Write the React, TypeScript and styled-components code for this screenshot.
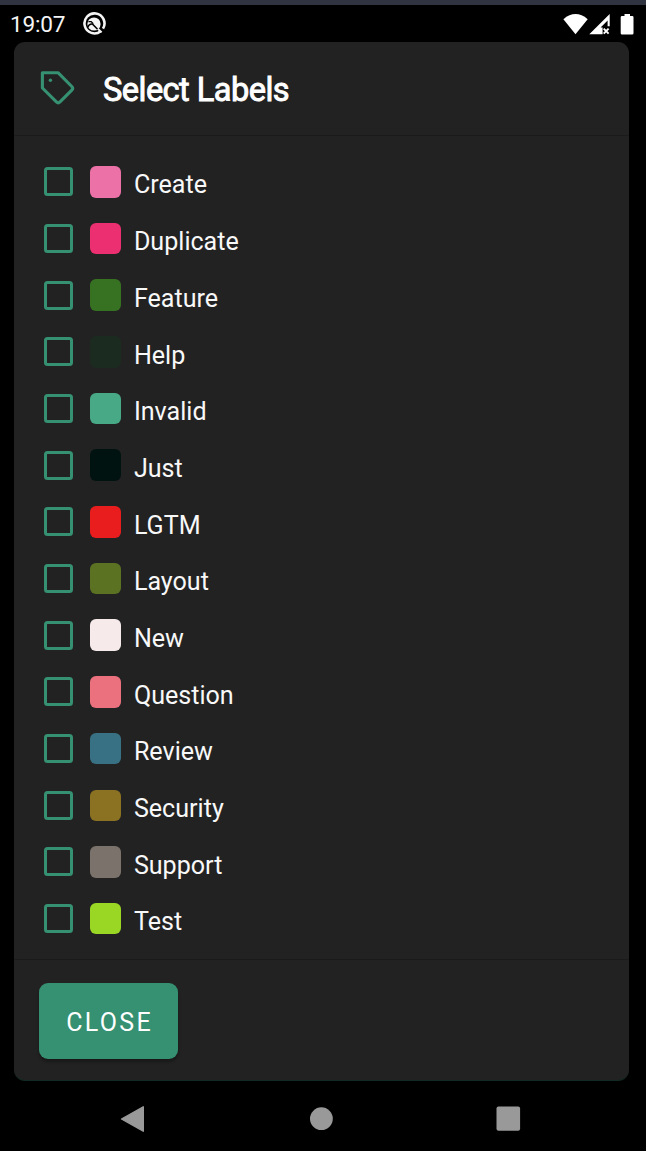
import React from 'react';
import styled, { createGlobalStyle } from 'styled-components';

const Global = createGlobalStyle`
  * { box-sizing: border-box; }
  body { margin: 0; background: #000; font-family: Roboto, sans-serif; color: #fff; }
`;

const Screen = styled.div`
  width: 646px;
  height: 1151px;
  display: flex;
  flex-direction: column;
  background: #000;
  border-top: 5px solid #303440;
  overflow: hidden;
`;

const StatusBar = styled.header`
  height: 37px;
  flex: none;
  display: flex;
  align-items: center;
  padding: 0 12px 0 10px;
`;

const Clock = styled.span`
  width: 72px;
  font-size: 22.6px;
  line-height: 37px;
  padding-top: 2px;
  letter-spacing: -0.2px;
  color: #f4f4f4;
`;

const StatusIcons = styled.div`
  margin-left: auto;
  display: flex;
`;

const Dialog = styled.main`
  width: 615px;
  height: 1039px;
  flex: none;
  margin-left: 14px;
  display: flex;
  flex-direction: column;
  background: #222;
  border-radius: 11px;
  border-bottom: 1px solid #122a24;
`;

const DialogHeader = styled.div`
  height: 94px;
  flex: none;
  display: flex;
  padding: 26px 0 0 25px;
  border-bottom: 1px solid #1b1b1b;
`;

const Title = styled.h1`
  margin: 1px 0 0 26px;
  font-size: 32.6px;
  font-weight: 400;
  line-height: 43px;
  letter-spacing: -0.55px;
  -webkit-text-stroke: 0.9px #fff;
`;

const LabelList = styled.ul`
  list-style: none;
  margin: 0;
  padding: 17.4px 0 0 29.8px;
  height: 824px;
  flex: none;
  border-bottom: 1px solid #1b1b1b;
`;

const LabelRow = styled.li`
  height: 56.69px;
  display: flex;
  align-items: center;
`;

const Checkbox = styled.span`
  width: 29px;
  height: 29px;
  border: 3px solid #369072;
  border-radius: 3.5px;
`;

const Swatch = styled.span<{ $color: string }>`
  width: 31.6px;
  height: 31.6px;
  margin-left: 17px;
  border-radius: 6px;
  background: ${({ $color }) => $color};
`;

const LabelName = styled.span`
  margin-left: 12.5px;
  padding-top: 7.5px;
  font-size: 25.1px;
  line-height: 32px;
  color: #f8f8f8;
`;

const DialogFooter = styled.div`
  padding: 23px 0 0 25.3px;
`;

const CloseButton = styled.button`
  display: block;
  width: 138.7px;
  height: 76px;
  padding: 4px 0 0 2px;
  border: 0;
  border-radius: 9px;
  background: #369072;
  box-shadow: 0 3px 3px rgba(0, 0, 0, 0.28);
  color: #fff;
  font: 400 25px/30px Roboto, sans-serif;
  letter-spacing: 2.3px;
`;

const NavBar = styled.nav`
  height: 70px;
  flex: none;
  display: flex;
  align-items: center;
  justify-content: space-between;
  padding: 5px 125px 0 120px;
`;

const labels = [
  { name: 'Create', color: '#eb71a7' },
  { name: 'Duplicate', color: '#ec2f70' },
  { name: 'Feature', color: '#377222' },
  { name: 'Help', color: '#1c2b20' },
  { name: 'Invalid', color: '#48a986' },
  { name: 'Just', color: '#001311' },
  { name: 'LGTM', color: '#ea1d1e' },
  { name: 'Layout', color: '#5a7222' },
  { name: 'New', color: '#f6eaea' },
  { name: 'Question', color: '#eb717f' },
  { name: 'Review', color: '#387184' },
  { name: 'Security', color: '#8b7122' },
  { name: 'Support', color: '#7b726b' },
  { name: 'Test', color: '#9ad624' },
];

const NotificationIcon = () => (
  <svg width="24" height="24" viewBox="0 0 24 24" fill="none">
    <path d="M18.7 19.2A10 10 0 1 1 21 16.6" stroke="#f5f5f5" strokeWidth="2.6" />
    <circle cx="12" cy="12" r="6.6" fill="#f5f5f5" />
    <path d="M5.4 15.6Q7.4 11.4 10.6 12.2L16.8 18.6" stroke="#000" strokeWidth="1.5" />
    <path d="M6.4 9.6L9.2 9.6L11.2 11.8" stroke="#000" strokeWidth="1.3" />
    <path d="M15.8 16.7L19.6 20.4" stroke="#f5f5f5" strokeWidth="2" />
  </svg>
);

const SignalIcons = () => (
  <svg width="72" height="22" viewBox="562 12 72 22" fill="#fff">
    <path d="M563.4 18.2Q575.5 8 587.7 18.2L575.5 33.2Z" />
    <path fillRule="evenodd" d="M589.3 33.2L609.7 13V25.3H607.6V19.4L600.6 26.4H602.6V33.2Z" />
    <path d="M603.7 27.6L608.6 32.6M608.6 27.6L603.7 32.6" stroke="#fff" strokeWidth="1.9" />
    <path d="M624.5 13H630V15.1H632.3Q633.5 15.1 633.5 16.3V32.2Q633.5 33.6 632.2 33.6H622Q620.7 33.6 620.7 32.2V16.3Q620.7 15.1 622 15.1H624.5Z" />
  </svg>
);

const TagIcon = () => (
  <svg width="38" height="38" viewBox="39 68 38 38" fill="none">
    <path
      d="M42.4 72.7H58L71.8 86.5Q73.6 88.3 71.8 90.1L60 101.9Q58.2 103.7 56.4 101.9L42.4 88Z"
      stroke="#369072"
      strokeWidth="3.1"
      strokeLinejoin="round"
    />
    <circle cx="50.4" cy="80.2" r="1.7" fill="#369072" />
  </svg>
);

export default function App() {
  return (
    <>
      <Global />
      <Screen>
        <StatusBar>
          <Clock>19:07</Clock>
          <NotificationIcon />
          <StatusIcons>
            <SignalIcons />
          </StatusIcons>
        </StatusBar>
        <Dialog>
          <DialogHeader>
            <TagIcon />
            <Title>Select Labels</Title>
          </DialogHeader>
          <LabelList>
            {labels.map(({ name, color }) => (
              <LabelRow key={name}>
                <Checkbox role="checkbox" aria-checked={false} aria-label={name} />
                <Swatch $color={color} />
                <LabelName>{name}</LabelName>
              </LabelRow>
            ))}
          </LabelList>
          <DialogFooter>
            <CloseButton>CLOSE</CloseButton>
          </DialogFooter>
        </Dialog>
        <NavBar>
          <svg width="25" height="28" viewBox="0 0 25 28">
            <path d="M1.5 14L23.3 1.8V26.2Z" fill="#999" stroke="#999" strokeWidth="1.4" strokeLinejoin="round" />
          </svg>
          <svg width="24" height="24" viewBox="0 0 24 24">
            <circle cx="12.4" cy="11.7" r="11.4" fill="#999" />
          </svg>
          <svg width="25" height="26" viewBox="0 0 25 26">
            <rect x="0.5" y="0.4" width="23.6" height="24.3" rx="2" fill="#999" />
          </svg>
        </NavBar>
      </Screen>
    </>
  );
}
